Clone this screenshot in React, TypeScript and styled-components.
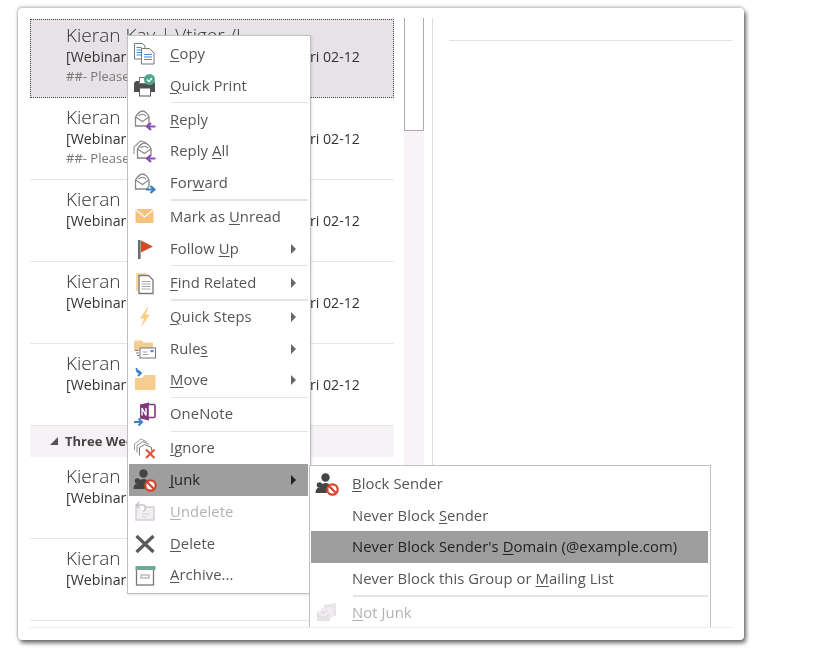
import React from "react";
import styled, { createGlobalStyle } from "styled-components";

const Global = createGlobalStyle`
  html, body { margin: 0; padding: 0; background: #fff; }
  body { font-family: "Open Sans", "Noto Sans", "Liberation Sans", sans-serif; }
`;

const Page = styled.div`
  width: 835px;
  height: 653px;
  padding: 8px 0 0 18px;
  box-sizing: border-box;
  overflow: hidden;
  background: #fff;
  filter: blur(0.5px);
`;

const Win = styled.div`
  position: relative;
  width: 726px;
  height: 632px;
  box-sizing: border-box;
  padding: 10px 0 0 12px;
  background: #fff;
  border-radius: 4px;
  box-shadow: 2px 3px 4px rgba(40, 40, 40, 0.7), 0 -2px 3px rgba(0, 0, 0, 0.16), -1px 0 2px rgba(0, 0, 0, 0.15);
`;

const Panes = styled.div`
  display: flex;
  height: 609px;
  border-bottom: 1px solid #eee;
  margin-right: 12px;
`;

const List = styled.div`
  width: 364px;
  flex: none;
`;

const Row = styled.div<{ $selected?: boolean }>`
  height: ${(p) => (p.$selected ? "79px" : "82px")};
  box-sizing: border-box;
  padding: ${(p) => (p.$selected ? "3px 0 0 35px" : "7px 0 0 36px")};
  margin-top: ${(p) => (p.$selected ? "1px" : "0")};
  background: ${(p) => (p.$selected ? "#e6e2e6" : "transparent")};
  border: ${(p) => (p.$selected ? "1px dotted #444" : "none")};
  border-bottom: ${(p) => (p.$selected ? "1px dotted #444" : "1px solid #e6e6e6")};
`;

const Sender = styled.div`
  font-size: 19px;
  line-height: 24px;
  font-weight: 300;
  color: #333;
  white-space: nowrap;
`;

const Subject = styled.div`
  display: flex;
  width: 294px;
  justify-content: space-between;
  font-size: 14.2px;
  line-height: 20px;
  color: #333;
  white-space: nowrap;
`;

const Preview = styled.div`
  font-size: 13px;
  line-height: 18px;
  color: #777;
  white-space: nowrap;
`;

const GroupHeader = styled.div`
  height: 31px;
  display: flex;
  align-items: center;
  gap: 7px;
  padding: 0 0 2px 20px;
  box-sizing: border-box;
  background: #f5f1f5;
  font-size: 13px;
  font-weight: 700;
  color: #444;
`;

const Caret = styled.span`
  width: 0;
  height: 0;
  border-left: 8px solid transparent;
  border-bottom: 8px solid #555;
`;

const Scrollbar = styled.div`
  width: 20px;
  flex: none;
  margin-left: 10px;
  background: #f7f3f7;
`;

const Thumb = styled.div`
  height: 113px;
  box-sizing: border-box;
  background: #fff;
  border: 1px solid #aaa;
  border-top: none;
`;

const Reading = styled.div`
  flex: 1;
  margin-left: 8px;
  padding: 22px 0 0 16px;
  border-left: 1px solid #ddd;
`;

const ReadingRule = styled.div`
  height: 1px;
  background: #e3e3e3;
`;

const Menu = styled.div`
  position: absolute;
  left: 109px;
  top: 27px;
  width: 184px;
  box-sizing: border-box;
  padding: 2px 2px 2px 1px;
  background: #fff;
  border: 1px solid #c0c0c0;
  box-shadow: 1px 1px 2px rgba(0, 0, 0, 0.12);
`;

const SubMenu = styled(Menu)`
  left: 291px;
  top: 457px;
  width: 402px;
  height: 162px;
  overflow: hidden;
  padding: 2px 2px 0 1px;
  border-bottom: none;
  box-shadow: none;
`;

const Item = styled.div<{ $active?: boolean; $disabled?: boolean }>`
  height: 31.7px;
  display: flex;
  align-items: center;
  font-size: 14.8px;
  letter-spacing: 0.08px;
  white-space: nowrap;
  color: ${(p) => (p.$disabled ? "#b4b0b4" : p.$active ? "#222" : "#555")};
  background: ${(p) => (p.$active ? "#9e9e9e" : "transparent")};
`;

const IconSlot = styled.span`
  width: 41px;
  flex: none;
  display: flex;
  padding-left: 4px;
  box-sizing: border-box;
`;

const Label = styled.span`
  flex: 1;
  padding-bottom: 2px;
`;

const Key = styled.span`
  text-decoration: underline;
  text-decoration-thickness: 1px;
  text-underline-offset: 2px;
`;

const Arrow = styled.span<{ $active?: boolean }>`
  width: 0;
  height: 0;
  margin-right: 12px;
  border-top: 5px solid transparent;
  border-bottom: 5px solid transparent;
  border-left: 5px solid ${(p) => (p.$active ? "#222" : "#666")};
`;

const Sep = styled.div`
  height: 1.4px;
  margin: 0.5px 0 0.5px 42px;
  background: #e4e4e4;
`;

const Svg = styled.svg`
  width: 24px;
  height: 24px;
  display: block;
`;

const dome = "M2.5 9 C5 5 8 3 9.5 3 C12 3 15 6 16 9 V15 L14 18 H2.500 Z";
const flap = "M2.5 9 L9.5 13.500 L16 9 M5.500 8 Q9.500 4.500 13 8";

const icons: Record<string, React.ReactNode> = {
  copy: (
    <>
      <path d="M1.5 1.500h8l2.500 2.500v13H1.500z" fill="#fff" stroke="#777" />
      <path d="M3.500 5.500h5M3.500 8h6M3.500 10.500h6M3.500 13h6" stroke="#4a8ad0" strokeWidth="1.200" />
      <path d="M8.500 6.500h8l4.500 4.500v11H8.500z" fill="#fff" stroke="#777" />
      <path d="M11 12.500h8M11 15h8M11 17.500h8" stroke="#4a8ad0" strokeWidth="1.200" />
    </>
  ),
  print: (
    <>
      <path d="M1 9l2-2h3V4h9v3h6l1 2v9h-4v-3H6v3H1z" fill="#4f4f4f" />
      <rect x="6.500" y="3.500" width="8" height="6" fill="#fff" stroke="#777" />
      <rect x="6.500" y="14" width="11" height="8" fill="#fff" stroke="#555" />
      <circle cx="16.500" cy="5.500" r="5.500" fill="#4fa58c" />
      <path d="M14 5.500l2 2 3-3.500" fill="none" stroke="#fff" strokeWidth="1.400" />
    </>
  ),
  reply: (
    <>
      <path d={dome} fill="#fff" stroke="#888" strokeWidth="1.300" />
      <path d={flap} fill="none" stroke="#888" strokeWidth="1.100" />
      <path d="M22.500 18.500h-8M18 15l-4 3.500 4 3.500" fill="none" stroke="#8a4bb3" strokeWidth="2.200" />
    </>
  ),
  replyAll: (
    <>
      <path d="M1 15V8L7.500 2 13 3.500" fill="none" stroke="#999" strokeWidth="1.200" />
      <g transform="translate(2 1)">
        <path d={dome} fill="#fff" stroke="#888" strokeWidth="1.300" />
        <path d={flap} fill="none" stroke="#888" strokeWidth="1.100" />
      </g>
      <path d="M22.500 19.500h-8M18 16l-4 3.500 4 3.500" fill="none" stroke="#8a4bb3" strokeWidth="2.200" />
    </>
  ),
  forward: (
    <>
      <path d={dome} fill="#fff" stroke="#888" strokeWidth="1.300" />
      <path d={flap} fill="none" stroke="#888" strokeWidth="1.100" />
      <path d="M13 18.500h8M17.500 15l4 3.500-4 3.500" fill="none" stroke="#3d7fc4" strokeWidth="2.200" />
    </>
  ),
  unread: (
    <>
      <rect x="2.500" y="4" width="18" height="14" fill="#f4c27e" />
      <path d="M2.500 4.500l9 7.500 9-7.500" fill="none" stroke="#fff" strokeWidth="1.200" />
    </>
  ),
  flag: (
    <>
      <rect x="5" y="3" width="2.600" height="19" fill="#6b6b6b" />
      <path d="M8 3.500l12 6-12 6z" fill="#d8492c" />
    </>
  ),
  find: (
    <>
      <path d="M3 2h10v18H3z" fill="#f8d6a6" />
      <path d="M6 4.500h9.500l4.500 4.500v13.500H6z" fill="#fff" stroke="#777" strokeWidth="1.300" />
      <path d="M8.500 10.500h9M8.500 13h9M8.500 15.500h9M8.500 18h9" stroke="#aaa" />
    </>
  ),
  steps: <path d="M14.500 2L7 13.500h4L8 22.500l9-13h-4.500l3-7.500z" fill="#f7cf85" />,
  rules: (
    <>
      <path d="M1 5l1-1.500h7l1.500 2H20v8H1z" fill="#f4cd92" />
      <rect x="7" y="11" width="15.500" height="10" fill="#fff" stroke="#777" />
      <path d="M2 13.500h3.500M3 16h3M4 18.500h2.500" stroke="#777" />
      <rect x="17.500" y="13" width="3" height="2.200" fill="#4a8ad0" />
      <path d="M9.500 15h5M9.500 17.500h6" stroke="#aaa" />
    </>
  ),
  move: (
    <>
      <path d="M2 10h7l3-3h10.500v15H2z" fill="#f6cd8e" />
      <path d="M3.500 0c0 4 1.500 5 4 5M5 2.500L8 5 5 8" fill="none" stroke="#3d7fc4" strokeWidth="1.800" />
    </>
  ),
  onenote: (
    <>
      <path d="M7 2.500l9-2v18l-9-2z" fill="#80397b" />
      <rect x="15" y="2.500" width="7" height="13" rx="1" fill="#fff" stroke="#80397b" strokeWidth="1.600" />
      <path d="M9 13.500V6l4 7.500V6" fill="none" stroke="#fff" strokeWidth="1.400" />
      <path d="M1 20h7M5.500 16.500L9 20l-3.500 3.500" fill="none" stroke="#3d7fc4" strokeWidth="2" />
    </>
  ),
  ignore: (
    <>
      <path d="M1.500 14V8L8 3l6 3" fill="none" stroke="#999" />
      <path d="M4 16.500v-7l6-4 6 3" fill="#fff" stroke="#888" />
      <path d="M6.500 19.500v-8l5-3 7 3v3" fill="#fff" stroke="#777" />
      <path d="M13 13.500l8.500 8.500M21.500 13.500L13 22" stroke="#e0563c" strokeWidth="2.200" />
    </>
  ),
  junk: (
    <>
      <circle cx="10.500" cy="5.500" r="4.200" fill="#444" />
      <path d="M5 21c-1-6 1.500-10 5.500-10 2.500 0 4 1 5 3l-4 7z" fill="#444" />
      <circle cx="4.500" cy="13" r="2.800" fill="#444" />
      <path d="M0.500 21c0-3.500 1.500-5.500 4-5.500s4 2 4 5.500z" fill="#444" />
      <circle cx="17.500" cy="17.500" r="5.200" fill="#fff" stroke="#d8432c" strokeWidth="2.200" />
      <path d="M14 14l7 7" stroke="#d8432c" strokeWidth="2.200" />
    </>
  ),
  undelete: (
    <>
      <path d="M3 7h18v13H3z" fill="#f2eef2" stroke="#d4d0d4" strokeWidth="1.500" />
      <path d="M9 14h8M9 17h5" stroke="#d4d0d4" />
      <path d="M4 5h6c3 0 3 6 0 6M6.500 2L3 5l3.500 3" fill="#fff" stroke="#c5c1c5" strokeWidth="1.300" />
    </>
  ),
  del: <path d="M3.500 4l17 16M20.500 4l-17 16" stroke="#5a5a5a" strokeWidth="3.200" />,
  archive: (
    <>
      <rect x="3.500" y="6" width="17" height="16" fill="#fff" stroke="#777" strokeWidth="1.300" />
      <rect x="2.500" y="3" width="20" height="4" fill="#71a892" />
      <rect x="8" y="12" width="8" height="3" fill="#fff" stroke="#999" />
    </>
  ),
  notJunk: (
    <>
      <path d="M9 4l12-2v13H9z" fill="#e9e5e9" />
      <path d="M6 7l12-1v11H6z" fill="#efebef" />
      <path d="M2 10h13v10H2z" fill="#e6e2e6" />
      <path d="M2 10l6.500 5L15 10" fill="none" stroke="#fff" />
    </>
  ),
};

const Icon = ({ name }: { name?: string }) => (
  <IconSlot>
    {name ? <Svg viewBox="0 0 24 24">{icons[name]}</Svg> : null}
  </IconSlot>
);

type Entry = {
  sep?: boolean;
  icon?: string;
  label?: React.ReactNode;
  more?: boolean;
  active?: boolean;
  disabled?: boolean;
};

const menu: Entry[] = [
  { icon: "copy", label: <><Key>C</Key>opy</> },
  { icon: "print", label: <><Key>Q</Key>uick Print</> },
  { sep: true },
  { icon: "reply", label: <><Key>R</Key>eply</> },
  { icon: "replyAll", label: <>Reply <Key>A</Key>ll</> },
  { icon: "forward", label: <>For<Key>w</Key>ard</> },
  { sep: true },
  { icon: "unread", label: <>Mark as <Key>U</Key>nread</> },
  { icon: "flag", label: <>Follow <Key>U</Key>p</>, more: true },
  { sep: true },
  { icon: "find", label: <><Key>F</Key>ind Related</>, more: true },
  { sep: true },
  { icon: "steps", label: <><Key>Q</Key>uick Steps</>, more: true },
  { icon: "rules", label: <>Rule<Key>s</Key></>, more: true },
  { icon: "move", label: <><Key>M</Key>ove</>, more: true },
  { sep: true },
  { icon: "onenote", label: <>OneNote</> },
  { sep: true },
  { icon: "ignore", label: <><Key>I</Key>gnore</> },
  { icon: "junk", label: <><Key>J</Key>unk</>, more: true, active: true },
  { icon: "undelete", label: <><Key>U</Key>ndelete</>, disabled: true },
  { icon: "del", label: <><Key>D</Key>elete</> },
  { icon: "archive", label: <><Key>A</Key>rchive...</> },
];

const junkMenu: Entry[] = [
  { icon: "junk", label: <><Key>B</Key>lock Sender</> },
  { label: <>Never Block <Key>S</Key>ender</> },
  { label: <>Never Block Sender's <Key>D</Key>omain (@example.com)</>, active: true },
  { label: <>Never Block this Group or <Key>M</Key>ailing List</> },
  { sep: true },
  { icon: "notJunk", label: <><Key>N</Key>ot Junk</>, disabled: true },
];

const Entries = ({ items }: { items: Entry[] }) => (
  <>
    {items.map((e, i) =>
      e.sep ? (
        <Sep key={i} />
      ) : (
        <Item key={i} $active={e.active} $disabled={e.disabled}>
          <Icon name={e.icon} />
          <Label>{e.label}</Label>
          {e.more ? <Arrow $active={e.active} /> : null}
        </Item>
      )
    )}
  </>
);

const Mail = ({ selected, sender = "Kieran", preview }: { selected?: boolean; sender?: string; preview?: boolean }) => (
  <Row $selected={selected}>
    <Sender>{sender}</Sender>
    <Subject>
      <span>[Webinar</span>
      <span>ri 02-12</span>
    </Subject>
    {preview ? <Preview>##- Please</Preview> : null}
  </Row>
);

export default function App() {
  return (
    <>
      <Global />
      <Page>
        <Win>
          <Panes>
            <List>
              <Mail selected sender="Kieran Kay | Vtiger /I" preview />
              <Mail preview />
              <Mail />
              <Mail />
              <Mail />
              <GroupHeader>
                <Caret />
                Three Weeks Ago
              </GroupHeader>
              <Mail />
              <Mail />
            </List>
            <Scrollbar>
              <Thumb />
            </Scrollbar>
            <Reading>
              <ReadingRule />
            </Reading>
          </Panes>
          <Menu>
            <Entries items={menu} />
          </Menu>
          <SubMenu>
            <Entries items={junkMenu} />
          </SubMenu>
        </Win>
      </Page>
    </>
  );
}
